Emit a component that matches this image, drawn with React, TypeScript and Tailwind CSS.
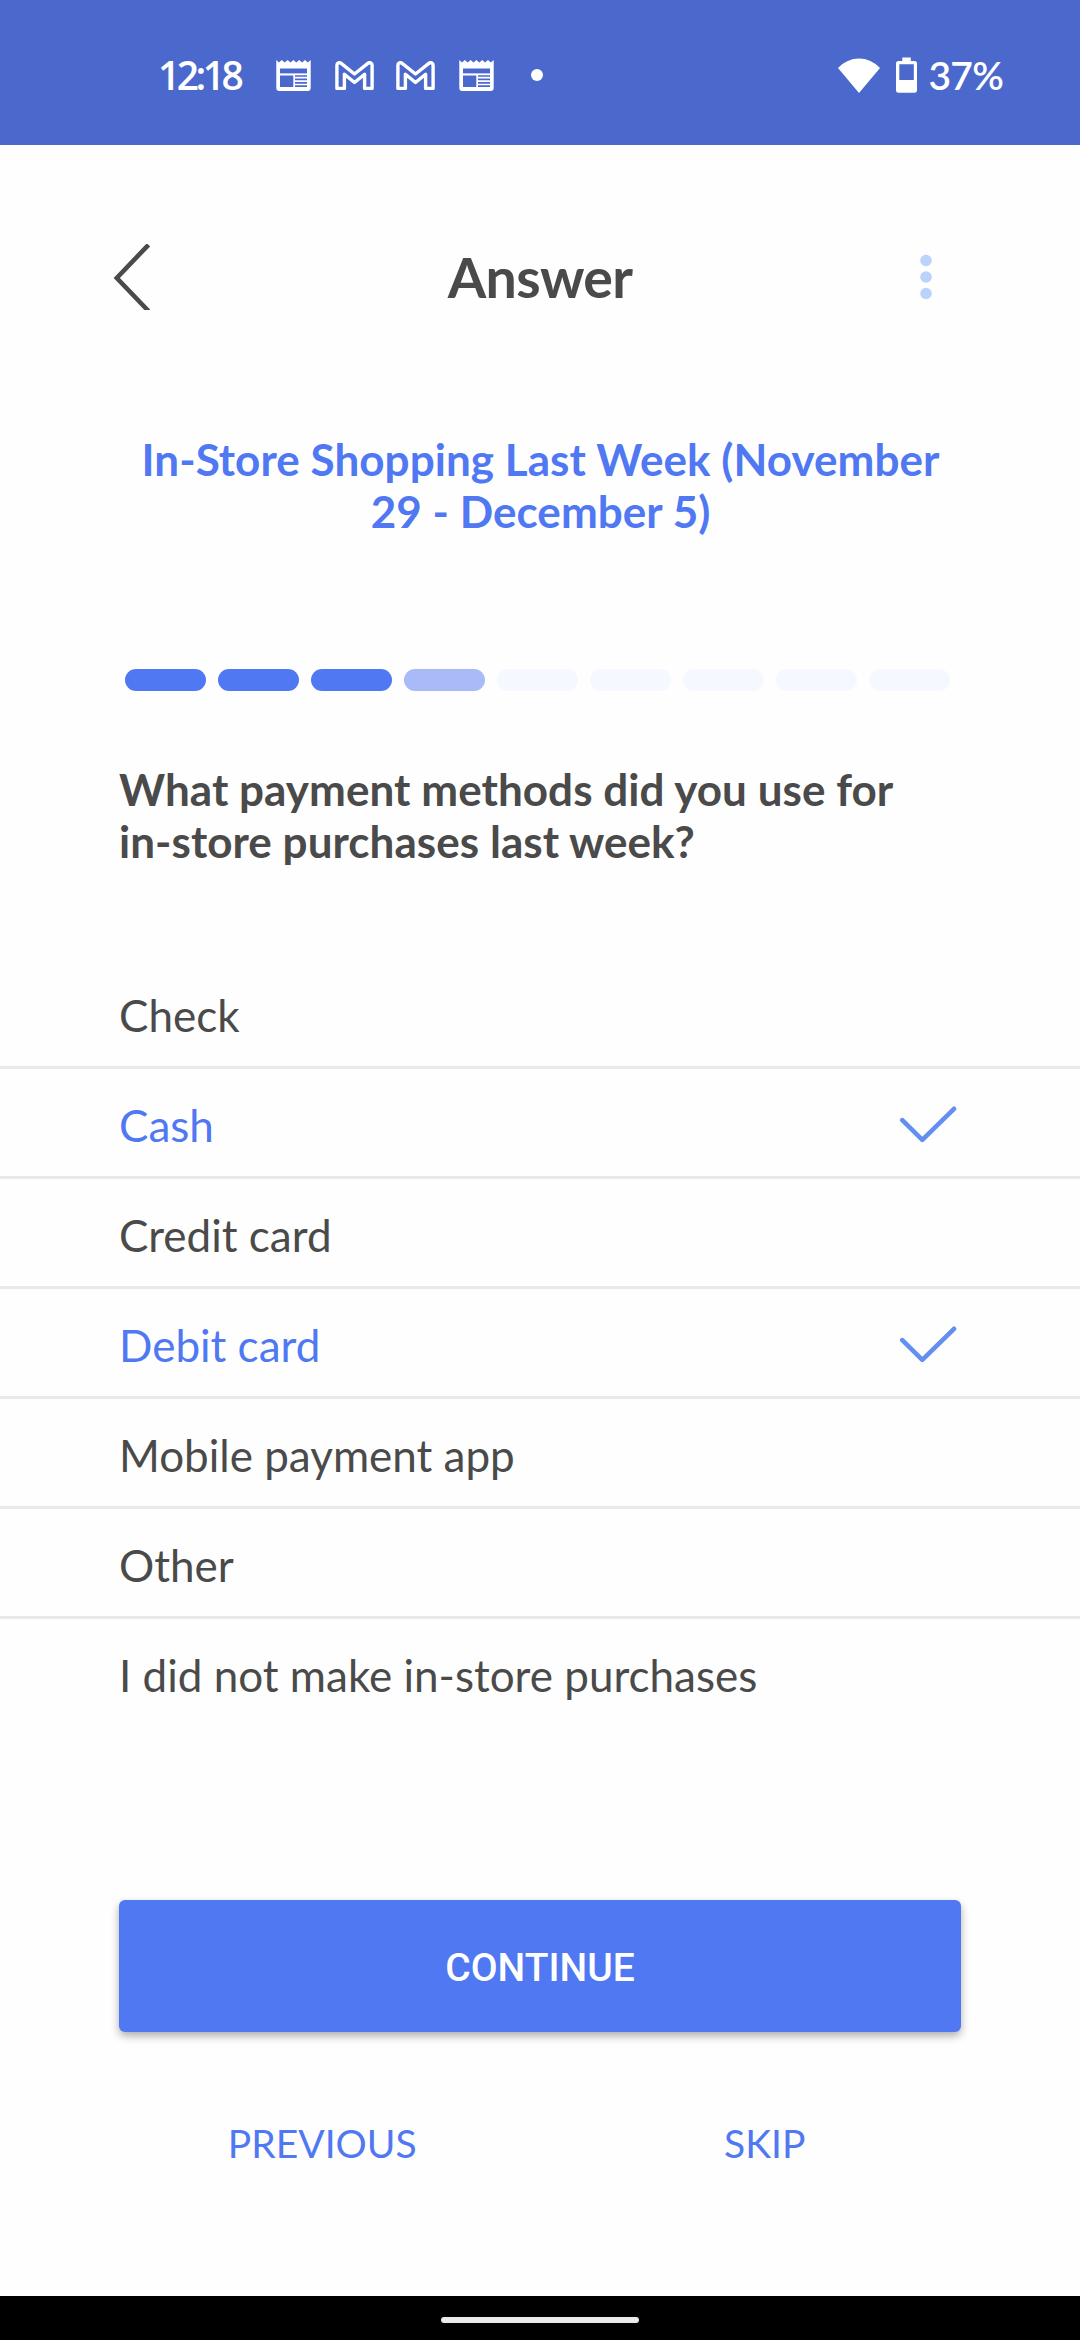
import React from "react";

const options = [
  { label: "Check", selected: false },
  { label: "Cash", selected: true },
  { label: "Credit card", selected: false },
  { label: "Debit card", selected: true },
  { label: "Mobile payment app", selected: false },
  { label: "Other", selected: false },
  { label: "I did not make in-store purchases", selected: false },
];

const segments = [
  "bg-[#5078f2]",
  "bg-[#5078f2]",
  "bg-[#5078f2]",
  "bg-[#a9baf8]",
  "bg-[#f5f9ff]",
  "bg-[#f5f9ff]",
  "bg-[#f5f9ff]",
  "bg-[#f5f9ff]",
  "bg-[#f5f9ff]",
];

const NewsIcon: React.FC = () => (
  <svg width="35" height="31" viewBox="0 0 35 31" fill="none">
    <path
      d="M0.3 0L3 2.5L5.8 0L8.7 2.5L11.6 0L14.5 2.5L17.4 0L20.3 2.5L23.2 0L26.1 2.5L29 0L31.8 2.5L34.7 0V28Q34.7 31 31.7 31H3.3Q0.3 31 0.3 28Z"
      fill="white"
    />
    <path d="M4 8.5H31V13.4H4Z" fill="#4b69cc" />
    <path d="M4 15.5H17.3V27H4Z" fill="#4b69cc" />
    <path
      d="M19 16H31M19 19.4H31M19 22.8H31M19 26.2H31"
      stroke="#4b69cc"
      strokeWidth="1.7"
    />
  </svg>
);

const MailIcon: React.FC = () => (
  <svg width="39" height="30" viewBox="0 0 39 30" fill="none">
    <path
      d="M1.9 27.4V4.2C1.9 1.8 4.4 1 6.2 2.4L19.5 13L32.8 2.4C34.6 1 37.1 1.8 37.1 4.2V27.4H29.6V13.2L19.5 21.5L9.4 13.2V27.4Z"
      stroke="white"
      strokeWidth="3.4"
      strokeLinejoin="round"
    />
  </svg>
);

const StatusBar: React.FC = () => (
  <div className="flex h-[145px] items-start bg-[#4b69cc] pt-[50px] text-[39px] leading-[50px] font-semibold text-white">
    <span className="ml-[158px] w-[118px] font-['Open_Sans',sans-serif] tracking-[-3.5px]">
      12:18
    </span>
    <div className="flex h-[51px] items-center gap-[26px]">
      <NewsIcon />
      <div className="-ml-[2px] flex gap-[22px]">
        <MailIcon />
        <MailIcon />
      </div>
      <div className="-ml-[2px]">
        <NewsIcon />
      </div>
    </div>
    <div className="mt-[19px] ml-[37px] size-3 rounded-full bg-white" />
    <div className="ml-auto flex h-[50px] items-center pr-[77px]">
      <svg width="42" height="35" viewBox="0 0 42 35">
        <path d="M0 10Q9 0.5 21 0.5T42 10L21 35Z" fill="white" />
      </svg>
      <svg className="ml-[16px]" width="21" height="36" viewBox="0 0 21 36">
        <path
          fillRule="evenodd"
          d="M6.3 0.5H14.8V4H18.5Q21 4 21 6.5V33.5Q21 35.7 18.5 35.7H2.5Q0 35.7 0 33.5V6.5Q0 4 2.5 4H6.3ZM3.3 7.3V23H17.8V7.3Z"
          fill="white"
        />
      </svg>
      <span className="ml-[12px] tracking-[-0.8px]">37%</span>
    </div>
  </div>
);

const Header: React.FC = () => (
  <header className="grid h-[264px] grid-cols-[118px_1fr_118px] items-center px-[108px]">
    <svg
      className="ml-[3px]"
      width="44"
      height="66"
      viewBox="0 0 44 66"
      fill="none"
    >
      <path d="M37.5 0.8L5.8 34L37.5 67" stroke="#4a4a4a" strokeWidth="4.6" />
    </svg>
    <h1 className="text-center text-[55.5px] leading-[68px] font-bold tracking-[-0.7px] text-[#4a4a4a]">
      Answer
    </h1>
    <svg
      className="ml-auto mr-[38px]"
      width="16"
      height="46"
      viewBox="0 0 16 46"
      fill="#bbd2fc"
    >
      <circle cx="8" cy="6.5" r="5.8" />
      <circle cx="8" cy="23" r="5.8" />
      <circle cx="8" cy="39.5" r="5.8" />
    </svg>
  </header>
);

const CheckMark: React.FC = () => (
  <svg width="64" height="40" viewBox="0 0 64 40" fill="none">
    <path
      d="M6.3 17.2L26.3 36.8L58 5.8"
      stroke="#628ff0"
      strokeWidth="4.6"
      strokeLinecap="round"
      strokeLinejoin="round"
    />
  </svg>
);

const App: React.FC = () => {
  return (
    <div className="flex h-[2340px] w-[1080px] flex-col overflow-hidden bg-[#fefefe] font-['Lato',sans-serif] text-[#4a4a4a]">
      <StatusBar />
      <Header />

      {/* Survey title */}
      <h2 className="mt-6 pl-px text-center text-[44px] leading-[52px] font-bold tracking-[0.05px] text-[#5078f2]">
        In-Store Shopping Last Week (November
        <br />
        29 - December 5)
      </h2>

      {/* Progress */}
      <div className="mt-[132px] ml-[125px] flex gap-3">
        {segments.map((color, i) => (
          <div key={i} className={`h-[22px] w-[81px] rounded-full ${color}`} />
        ))}
      </div>

      <h3 className="mt-[72px] ml-[119px] text-[44px] leading-[52px] font-bold tracking-[0.05px]">
        What payment methods did you use for
        <br />
        in-store purchases last week?
      </h3>

      {/* Answers */}
      <ul className="mt-[92px]">
        {options.map(({ label, selected }) => (
          <li
            key={label}
            className={`flex h-[110px] items-center justify-between border-b-[3px] border-[#e9e9e9] pr-[120px] pl-[119px] text-[44px] leading-[52px] last:border-transparent ${
              selected ? "text-[#5078f2]" : ""
            }`}
          >
            <span className="pt-[5px]">{label}</span>
            {selected && <CheckMark />}
          </li>
        ))}
      </ul>

      {/* Actions */}
      <button className="mt-[171px] ml-[119px] h-[132px] w-[842px] shrink-0 rounded-[6px] bg-[#5078f2] pt-[5px] font-['Roboto',sans-serif] text-[39px] font-medium text-white shadow-[0_4px_8px_rgba(0,0,0,0.32)]">
        CONTINUE
      </button>
      <div className="mt-[81px] ml-[101px] grid w-[885px] grid-cols-2 text-[39px] leading-[60px] text-[#5078f2]">
        <button>PREVIOUS</button>
        <button>SKIP</button>
      </div>

      {/* Gesture bar */}
      <div className="mt-auto flex h-11 justify-center bg-black pt-[21px]">
        <div className="h-[6px] w-[198px] rounded-full bg-[#ebebeb]" />
      </div>
    </div>
  );
};

export default App;
